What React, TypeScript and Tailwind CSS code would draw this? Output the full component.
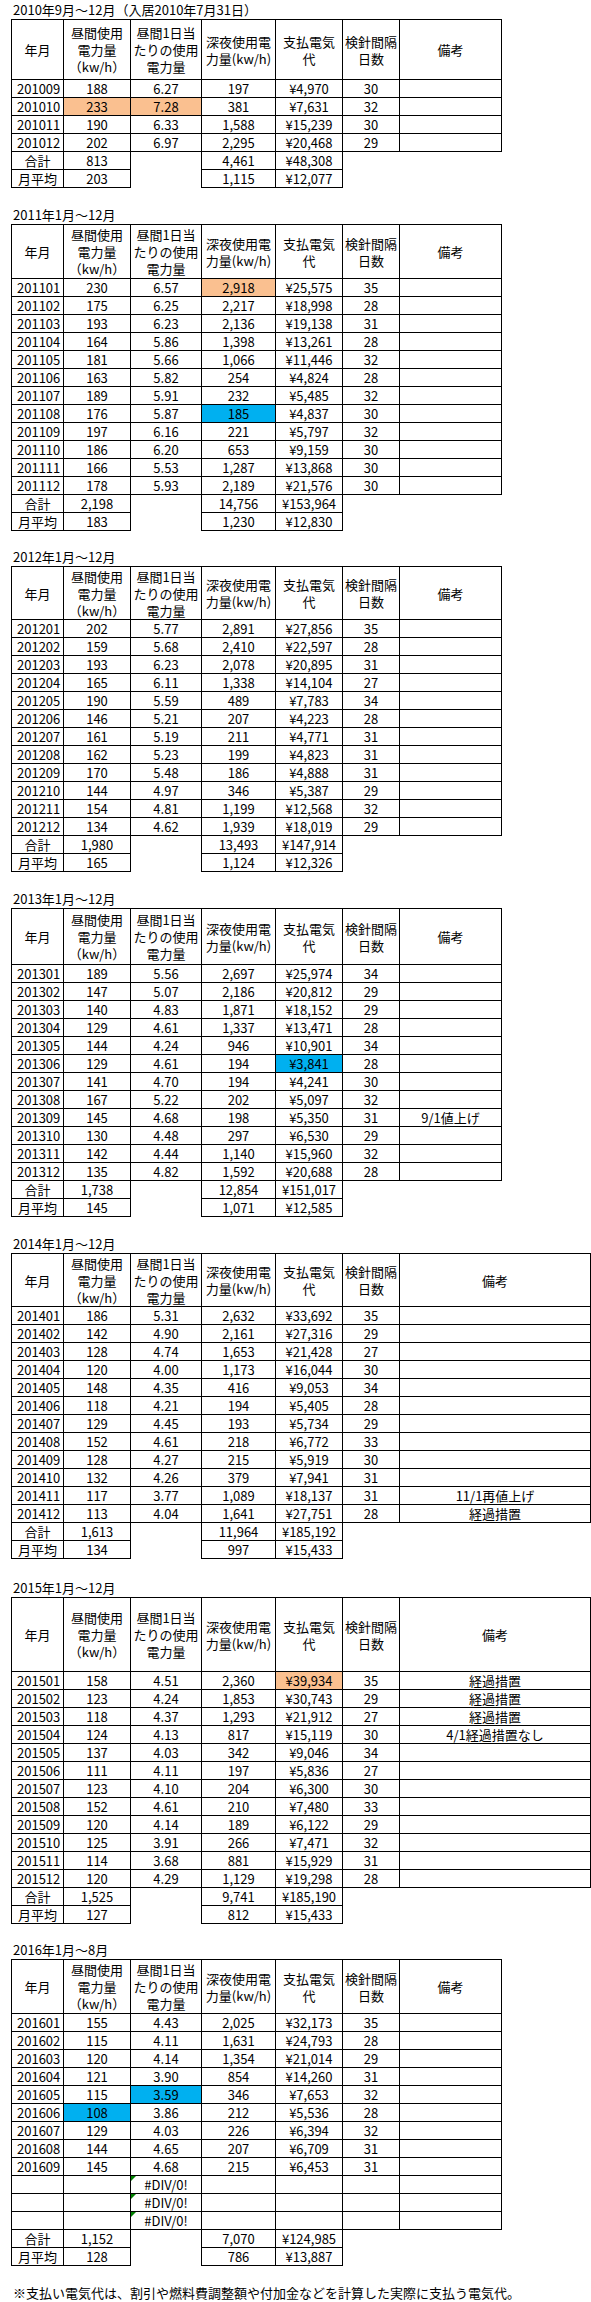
import React from 'react'

// 電気使用量の記録表（Excel風）

type Row = string[] // [年月, 昼間, 昼間1日, 深夜, 支払, 日数, 備考?]

interface Section {
  title: string
  gap: string
  headH: string
  wide?: boolean
  rows: Row[]
  blank?: number
  total: string[]
  avg: string[]
  hl?: Record<string, 'o' | 'b'>
}

const sections: Section[] = [
  {
    title: '2010年9月～12月（入居2010年7月31日）',
    gap: 'mt-0',
    headH: 'h-[60px]',
    rows: [
      ['201009', '188', '6.27', '197', '¥4,970', '30'],
      ['201010', '233', '7.28', '381', '¥7,631', '32'],
      ['201011', '190', '6.33', '1,588', '¥15,239', '30'],
      ['201012', '202', '6.97', '2,295', '¥20,468', '29'],
    ],
    total: ['813', '4,461', '¥48,308'],
    avg: ['203', '1,115', '¥12,077'],
    hl: { '1-1': 'o', '1-2': 'o' },
  },
  {
    title: '2011年1月～12月',
    gap: 'mt-[18px]',
    headH: 'h-[54px]',
    rows: [
      ['201101', '230', '6.57', '2,918', '¥25,575', '35'],
      ['201102', '175', '6.25', '2,217', '¥18,998', '28'],
      ['201103', '193', '6.23', '2,136', '¥19,138', '31'],
      ['201104', '164', '5.86', '1,398', '¥13,261', '28'],
      ['201105', '181', '5.66', '1,066', '¥11,446', '32'],
      ['201106', '163', '5.82', '254', '¥4,824', '28'],
      ['201107', '189', '5.91', '232', '¥5,485', '32'],
      ['201108', '176', '5.87', '185', '¥4,837', '30'],
      ['201109', '197', '6.16', '221', '¥5,797', '32'],
      ['201110', '186', '6.20', '653', '¥9,159', '30'],
      ['201111', '166', '5.53', '1,287', '¥13,868', '30'],
      ['201112', '178', '5.93', '2,189', '¥21,576', '30'],
    ],
    total: ['2,198', '14,756', '¥153,964'],
    avg: ['183', '1,230', '¥12,830'],
    hl: { '0-3': 'o', '7-3': 'b' },
  },
  {
    title: '2012年1月～12月',
    gap: 'mt-[17px]',
    headH: 'h-[53px]',
    rows: [
      ['201201', '202', '5.77', '2,891', '¥27,856', '35'],
      ['201202', '159', '5.68', '2,410', '¥22,597', '28'],
      ['201203', '193', '6.23', '2,078', '¥20,895', '31'],
      ['201204', '165', '6.11', '1,338', '¥14,104', '27'],
      ['201205', '190', '5.59', '489', '¥7,783', '34'],
      ['201206', '146', '5.21', '207', '¥4,223', '28'],
      ['201207', '161', '5.19', '211', '¥4,771', '31'],
      ['201208', '162', '5.23', '199', '¥4,823', '31'],
      ['201209', '170', '5.48', '186', '¥4,888', '31'],
      ['201210', '144', '4.97', '346', '¥5,387', '29'],
      ['201211', '154', '4.81', '1,199', '¥12,568', '32'],
      ['201212', '134', '4.62', '1,939', '¥18,019', '29'],
    ],
    total: ['1,980', '13,493', '¥147,914'],
    avg: ['165', '1,124', '¥12,326'],
  },
  {
    title: '2013年1月～12月',
    gap: 'mt-[18px]',
    headH: 'h-[56px]',
    rows: [
      ['201301', '189', '5.56', '2,697', '¥25,974', '34'],
      ['201302', '147', '5.07', '2,186', '¥20,812', '29'],
      ['201303', '140', '4.83', '1,871', '¥18,152', '29'],
      ['201304', '129', '4.61', '1,337', '¥13,471', '28'],
      ['201305', '144', '4.24', '946', '¥10,901', '34'],
      ['201306', '129', '4.61', '194', '¥3,841', '28'],
      ['201307', '141', '4.70', '194', '¥4,241', '30'],
      ['201308', '167', '5.22', '202', '¥5,097', '32'],
      ['201309', '145', '4.68', '198', '¥5,350', '31', '9/1値上げ'],
      ['201310', '130', '4.48', '297', '¥6,530', '29'],
      ['201311', '142', '4.44', '1,140', '¥15,960', '32'],
      ['201312', '135', '4.82', '1,592', '¥20,688', '28'],
    ],
    total: ['1,738', '12,854', '¥151,017'],
    avg: ['145', '1,071', '¥12,585'],
    hl: { '5-4': 'b' },
  },
  {
    title: '2014年1月～12月',
    gap: 'mt-[18px]',
    headH: 'h-[53px]',
    wide: true,
    rows: [
      ['201401', '186', '5.31', '2,632', '¥33,692', '35'],
      ['201402', '142', '4.90', '2,161', '¥27,316', '29'],
      ['201403', '128', '4.74', '1,653', '¥21,428', '27'],
      ['201404', '120', '4.00', '1,173', '¥16,044', '30'],
      ['201405', '148', '4.35', '416', '¥9,053', '34'],
      ['201406', '118', '4.21', '194', '¥5,405', '28'],
      ['201407', '129', '4.45', '193', '¥5,734', '29'],
      ['201408', '152', '4.61', '218', '¥6,772', '33'],
      ['201409', '128', '4.27', '215', '¥5,919', '30'],
      ['201410', '132', '4.26', '379', '¥7,941', '31'],
      ['201411', '117', '3.77', '1,089', '¥18,137', '31', '11/1再値上げ'],
      ['201412', '113', '4.04', '1,641', '¥27,751', '28', '経過措置'],
    ],
    total: ['1,613', '11,964', '¥185,192'],
    avg: ['134', '997', '¥15,433'],
  },
  {
    title: '2015年1月～12月',
    gap: 'mt-[20px]',
    headH: 'h-[74px]',
    wide: true,
    rows: [
      ['201501', '158', '4.51', '2,360', '¥39,934', '35', '経過措置'],
      ['201502', '123', '4.24', '1,853', '¥30,743', '29', '経過措置'],
      ['201503', '118', '4.37', '1,293', '¥21,912', '27', '経過措置'],
      ['201504', '124', '4.13', '817', '¥15,119', '30', '4/1経過措置なし'],
      ['201505', '137', '4.03', '342', '¥9,046', '34'],
      ['201506', '111', '4.11', '197', '¥5,836', '27'],
      ['201507', '123', '4.10', '204', '¥6,300', '30'],
      ['201508', '152', '4.61', '210', '¥7,480', '33'],
      ['201509', '120', '4.14', '189', '¥6,122', '29'],
      ['201510', '125', '3.91', '266', '¥7,471', '32'],
      ['201511', '114', '3.68', '881', '¥15,929', '31'],
      ['201512', '120', '4.29', '1,129', '¥19,298', '28'],
    ],
    total: ['1,525', '9,741', '¥185,190'],
    avg: ['127', '812', '¥15,433'],
    hl: { '0-4': 'o' },
  },
  {
    title: '2016年1月～8月',
    gap: 'mt-[17px]',
    headH: 'h-[54px]',
    rows: [
      ['201601', '155', '4.43', '2,025', '¥32,173', '35'],
      ['201602', '115', '4.11', '1,631', '¥24,793', '28'],
      ['201603', '120', '4.14', '1,354', '¥21,014', '29'],
      ['201604', '121', '3.90', '854', '¥14,260', '31'],
      ['201605', '115', '3.59', '346', '¥7,653', '32'],
      ['201606', '108', '3.86', '212', '¥5,536', '28'],
      ['201607', '129', '4.03', '226', '¥6,394', '32'],
      ['201608', '144', '4.65', '207', '¥6,709', '31'],
      ['201609', '145', '4.68', '215', '¥6,453', '31'],
    ],
    blank: 3,
    total: ['1,152', '7,070', '¥124,985'],
    avg: ['128', '786', '¥13,887'],
    hl: { '4-2': 'b', '5-1': 'b' },
  },
]

const cell = 'border border-black p-0 align-middle text-center whitespace-nowrap overflow-hidden'
const hcell = 'border border-black p-0 align-middle text-center whitespace-nowrap leading-[17px]'

const Header = ({ h }: { h: string }) => (
  <tr className={h}>
    <td className={hcell}>年月</td>
    <td className={hcell}>
      昼間使用
      <br />
      電力量
      <br />
      （kw/h）
    </td>
    <td className={hcell}>
      昼間1日当
      <br />
      たりの使用
      <br />
      電力量
    </td>
    <td className={hcell}>
      深夜使用電
      <br />
      力量(kw/h)
    </td>
    <td className={hcell}>
      支払電気
      <br />
      代
    </td>
    <td className={hcell}>
      検針間隔
      <br />
      日数
    </td>
    <td className={hcell}>備考</td>
  </tr>
)

function Table({ s }: { s: Section }) {
  const bg = (r: number, c: number) => {
    const k = s.hl?.[`${r}-${c}`]
    if (k === 'o') return ' bg-[#fac090]'
    if (k === 'b') return ' bg-[#00b0f0]'
    return ''
  }

  return (
    <table className={`table-fixed border-collapse leading-[16px] ${s.wide ? 'w-[579px]' : 'w-[490px]'}`}>
      <colgroup>
        <col className="w-[52px]" />
        <col className="w-[67px]" />
        <col className="w-[71px]" />
        <col className="w-[74px]" />
        <col className="w-[67px]" />
        <col className="w-[57px]" />
        <col className={s.wide ? 'w-[191px]' : 'w-[102px]'} />
      </colgroup>
      <tbody>
        <Header h={s.headH} />

        {/* 月ごとの行 */}
        {s.rows.map((r, i) => (
          <tr key={r[0]} className="h-[18px]">
            <td className={`${cell} !text-left pl-[5px]`}>{r[0]}</td>
            {[1, 2, 3, 4, 5].map((c) => (
              <td key={c} className={cell + bg(i, c)}>
                {r[c]}
              </td>
            ))}
            <td className={cell}>{r[6] ?? ''}</td>
          </tr>
        ))}

        {/* 未入力の行 (#DIV/0!) */}
        {Array.from({ length: s.blank ?? 0 }).map((_, i) => (
          <tr key={`b${i}`} className="h-[18px]">
            <td className={cell} />
            <td className={cell} />
            <td className={`${cell} relative`}>
              <span className="absolute left-0 top-0 h-0 w-0 border-r-[5px] border-t-[5px] border-r-transparent border-t-[#008000]" />
              #DIV/0!
            </td>
            <td className={cell} />
            <td className={cell} />
            <td className={cell} />
            <td className={cell} />
          </tr>
        ))}

        {/* 合計・月平均 */}
        {[
          ['合計', s.total],
          ['月平均', s.avg],
        ].map(([label, v]) => (
          <tr key={label as string} className="h-[18px]">
            <td className={cell}>{label as string}</td>
            <td className={cell}>{(v as string[])[0]}</td>
            <td className="p-0" />
            <td className={cell}>{(v as string[])[1]}</td>
            <td className={cell}>{(v as string[])[2]}</td>
            <td className="p-0" />
            <td className="p-0" />
          </tr>
        ))}
      </tbody>
    </table>
  )
}

export default function App() {
  return (
    <div className="w-[591px] bg-white pt-px pl-[11px] text-[13px] leading-[18px] text-black font-['Noto_Sans_CJK_JP',sans-serif]">
      {sections.map((s) => (
        <section key={s.title} className={s.gap}>
          <div className="h-[18px] pl-[2px]">{s.title}</div>
          <Table s={s} />
        </section>
      ))}
      <p className="mt-[18px] h-[18px] pl-[2px]">
        ※支払い電気代は、割引や燃料費調整額や付加金などを計算した実際に支払う電気代。
      </p>
    </div>
  )
}
